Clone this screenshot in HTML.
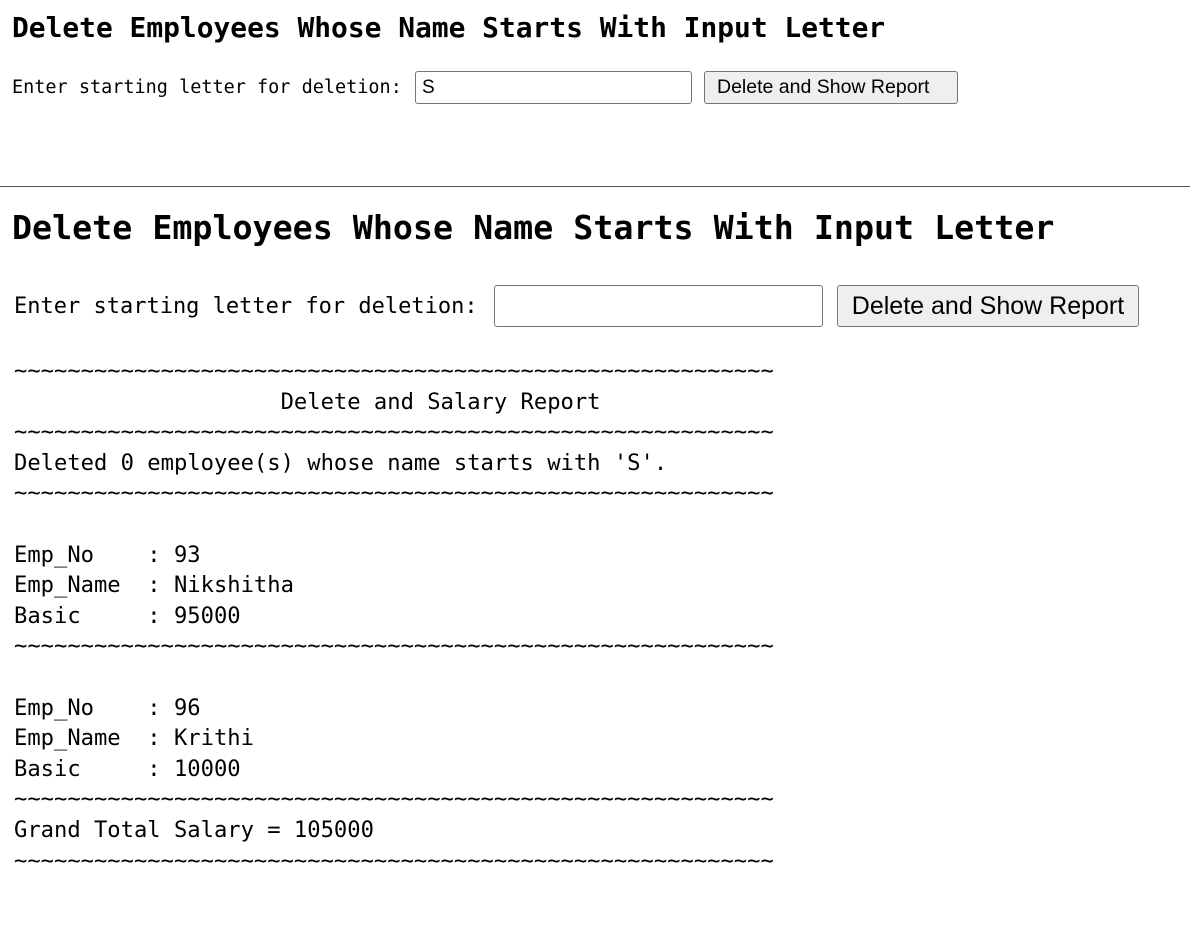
<!DOCTYPE html>
<html><head><meta charset="utf-8"><style>
body{margin:0;width:1190px;height:939px;background:#fff;position:relative;overflow:hidden;font-family:"DejaVu Sans Mono","Liberation Mono",monospace;color:#000}
.a{position:absolute;white-space:pre;margin:0}
.inp{position:absolute;box-sizing:border-box;border:1px solid #767676;border-radius:3px;background:#fff;font-family:"Liberation Sans",sans-serif}
.btn{position:absolute;box-sizing:border-box;border:1px solid #767676;border-radius:3px;background:#efefef;font-family:"Liberation Sans",sans-serif;text-align:center}
</style></head><body>
<div class="a" style="left:12px;top:10px;font-size:27.9px;font-weight:bold;line-height:36px">Delete Employees Whose Name Starts With Input Letter</div>
<div class="a" style="left:12px;top:77px;font-size:18.5px;line-height:22px">Enter starting letter for deletion:</div>
<div class="inp" style="left:415px;top:71px;width:277px;height:33px;font-size:19px;line-height:31px;padding-left:6px">S</div>
<div class="btn" style="left:704px;top:71px;width:254px;height:33px;font-size:19.5px;line-height:31px;text-align:left;padding-left:12px">Delete and Show Report</div>
<div style="position:absolute;left:0;top:186px;width:1190px;height:1px;background:#555"></div>
<div class="a" style="left:12px;top:207px;font-size:33.3px;font-weight:bold;line-height:42px">Delete Employees Whose Name Starts With Input Letter</div>
<div class="a" style="left:14px;top:293px;font-size:22px;line-height:28px">Enter starting letter for deletion:</div>
<div class="inp" style="left:494px;top:285px;width:329px;height:42px"></div>
<div class="btn" style="left:837px;top:285px;width:302px;height:42px;font-size:25px;line-height:40px">Delete and Show Report</div>
<pre class="a" style="left:14px;top:356px;font-size:22.15px;line-height:30.6px;font-family:'DejaVu Sans Mono',monospace">~~~~~~~~~~~~~~~~~~~~~~~~~~~~~~~~~~~~~~~~~~~~~~~~~~~~~~~~~
                    Delete and Salary Report
~~~~~~~~~~~~~~~~~~~~~~~~~~~~~~~~~~~~~~~~~~~~~~~~~~~~~~~~~
Deleted 0 employee(s) whose name starts with 'S'.
~~~~~~~~~~~~~~~~~~~~~~~~~~~~~~~~~~~~~~~~~~~~~~~~~~~~~~~~~

Emp_No    : 93
Emp_Name  : Nikshitha
Basic     : 95000
~~~~~~~~~~~~~~~~~~~~~~~~~~~~~~~~~~~~~~~~~~~~~~~~~~~~~~~~~

Emp_No    : 96
Emp_Name  : Krithi
Basic     : 10000
~~~~~~~~~~~~~~~~~~~~~~~~~~~~~~~~~~~~~~~~~~~~~~~~~~~~~~~~~
Grand Total Salary = 105000
~~~~~~~~~~~~~~~~~~~~~~~~~~~~~~~~~~~~~~~~~~~~~~~~~~~~~~~~~</pre>
</body></html>
